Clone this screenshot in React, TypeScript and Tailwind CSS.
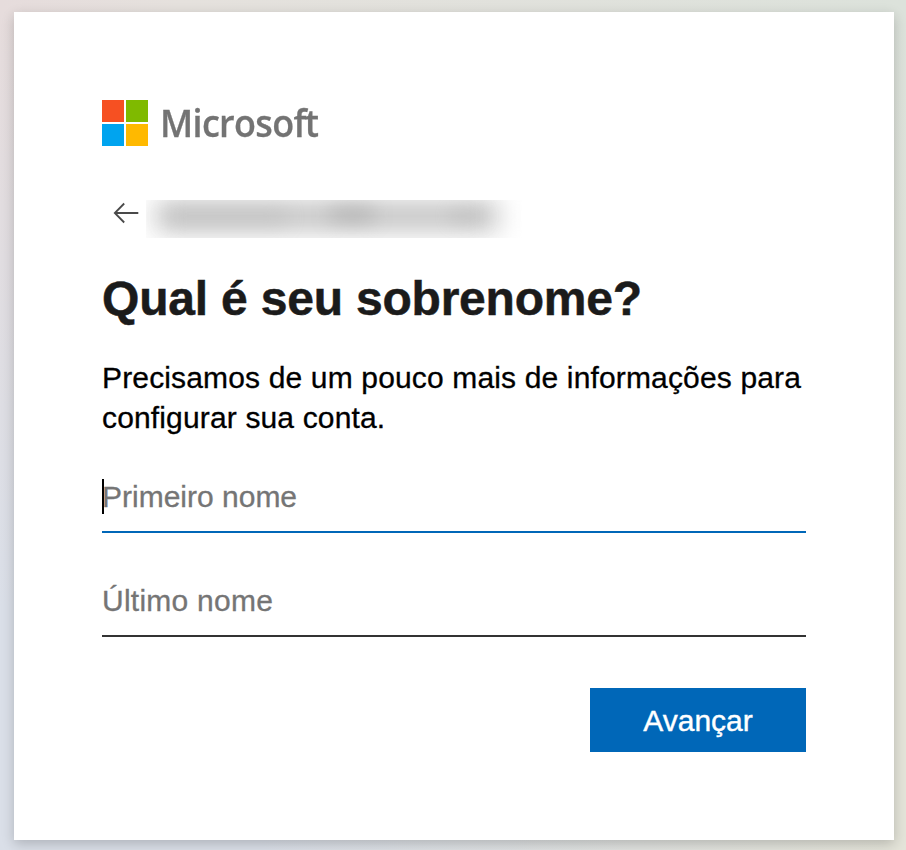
function MicrosoftLogo() {
  return (
    <div className="flex h-[46px] items-center">
      <svg className="h-[46px] w-[46px] shrink-0" viewBox="0 0 46 46" aria-hidden="true">
        <path fill="#f65022" d="M0 0h22v22H0z" />
        <path fill="#7fba00" d="M24 0h22v22H24z" />
        <path fill="#00a4ef" d="M0 24h22v22H0z" />
        <path fill="#ffb900" d="M24 24h22v22H24z" />
      </svg>
      <span className="-mt-[2px] ml-[11.5px] origin-left scale-x-[0.935] font-['Open_Sans',sans-serif] text-[38.5px] leading-[46px] font-semibold tracking-[-0.7px] text-[#737373] [-webkit-text-stroke:0.3px_#737373]">
        Microso<span className="tracking-[-1.9px]">f</span>t
      </span>
    </div>
  );
}

function Identity() {
  return (
    <div className="mt-[54px] flex h-[38px]">
      <button type="button" aria-label="Voltar" className="ml-[11px] h-[26px] w-[26px]">
        <svg viewBox="0 0 26 26" className="h-[26px] w-[26px]" fill="none" stroke="#4a4a4a" strokeWidth="1.8">
          <path d="M25.3 13H1.6M11.2 3.5L1.8 13L11.2 22.5" />
        </svg>
      </button>
      <div className="relative ml-[7px] h-[38px] w-[376px] overflow-hidden">
        <div className="absolute top-[2px] left-[10px] h-[28px] w-[342px] bg-[#c0c0c0] blur-[13px]" />
        <div className="absolute top-[8px] left-[20px] h-[18px] w-[120px] bg-[#a8a8a8] opacity-25 blur-[10px]" />
        <div className="absolute top-[6px] left-[184px] h-[16px] w-[44px] bg-[#8c8c8c] opacity-40 blur-[10px]" />
        <div className="absolute top-[8px] left-[304px] h-[16px] w-[34px] bg-[#a8a8a8] opacity-25 blur-[8px]" />
      </div>
    </div>
  );
}

export default function App() {
  return (
    <main className="h-[850px] w-[906px] overflow-hidden bg-[radial-gradient(ellipse_at_bottom_left,#dadfe8_20%,transparent_70%),radial-gradient(ellipse_at_bottom_right,#e4e4d9_20%,transparent_70%),linear-gradient(90deg,#e6dcdc_0%,#e5e1dd_20%,#dce2db_100%)] pt-[12px] pl-[14px] font-['Liberation_Sans',Arial,sans-serif]">
      <section className="flex h-[828px] w-[880px] flex-col bg-white p-[88px] shadow-[0_4px_12px_rgba(0,0,0,0.2)]">
        <MicrosoftLogo />
        <Identity />
        <h1 className="mt-[33px] text-[48px] leading-[56px] font-bold tracking-[-0.2px] whitespace-nowrap text-[#1b1b1b] [-webkit-text-stroke:0.5px_#1b1b1b]">
          Qual é seu sobrenome?
        </h1>
        <p className="mt-[31px] text-[30px] leading-[40px] tracking-[0.15px] whitespace-nowrap text-black [-webkit-text-stroke:0.3px_black]">
          Precisamos de um pouco mais de informações para
          <br />
          configurar sua conta.
        </p>
        <div className="relative mt-[23px] h-[72px] border-b-2 border-[#0067b8] text-[30px] leading-[72px] text-[#757575] [-webkit-text-stroke:0.3px_#757575]">
          Primeiro nome
          <span className="absolute top-[18px] left-0 h-[35px] w-[2px] bg-black" />
        </div>
        <div className="mt-[32px] h-[72px] border-b-2 border-[#333333] text-[30px] leading-[72px] tracking-[0.25px] text-[#757575] [-webkit-text-stroke:0.3px_#757575]">
          Último nome
        </div>
        <button
          type="button"
          className="mt-[51px] h-[64px] w-[216px] self-end bg-[#0067b8] pt-[2px] text-[30px] leading-[62px] text-white [-webkit-text-stroke:0.4px_white]"
        >
          Avançar
        </button>
      </section>
    </main>
  );
}
